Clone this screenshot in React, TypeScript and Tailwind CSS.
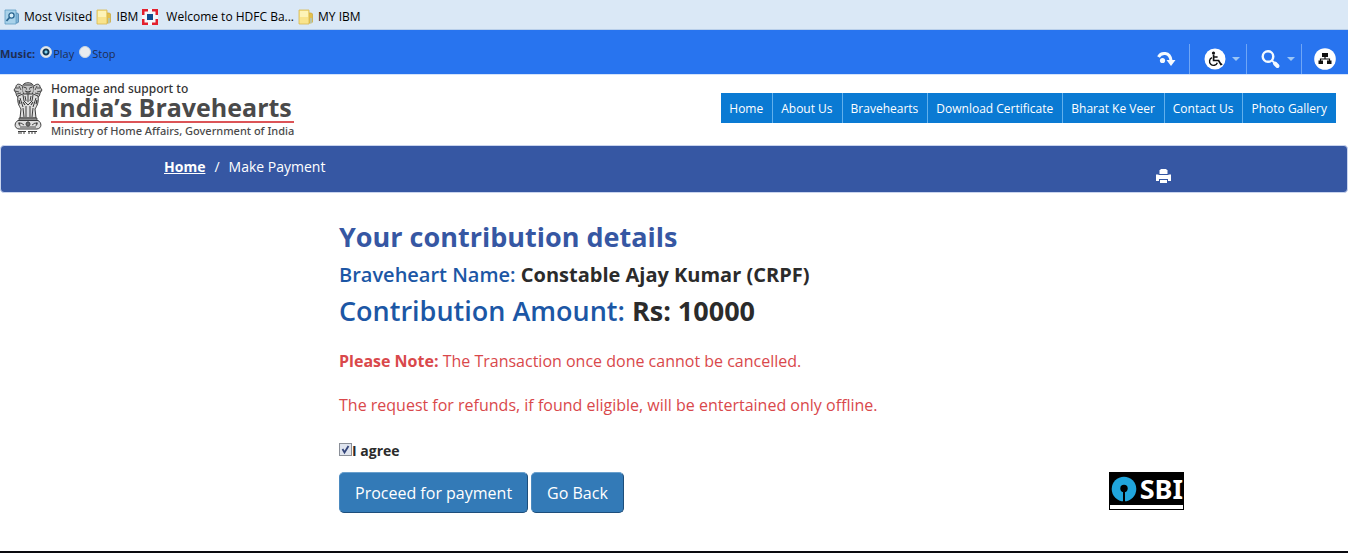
import { useState } from "react";

const FolderIcon = () => (
  <svg width="16" height="16" viewBox="0 0 16 16" aria-hidden="true">
    <path d="M9 4h4.500l1 1v8l-1 1H9z" fill="#e3c04e" stroke="#c9a63c" strokeWidth=".7" />
    <path d="M1 1h10v14H1z" fill="#f9e48d" stroke="#d8b850" strokeWidth=".8" />
    <path d="M2 2h8v6H2z" fill="#fdf3b8" />
    <path d="M12 9h2v5h-2z" fill="#b9c6a8" />
  </svg>
);

const MostVisitedIcon = () => (
  <svg width="16" height="16" viewBox="0 0 16 16" aria-hidden="true">
    <path d="M10 4h3.500l1 1v8l-1 1H10z" fill="#7fb3d6" stroke="#4c83ab" strokeWidth=".8" />
    <path d="M1 1h11v14H1z" fill="#a9d2ea" stroke="#5f9cc4" strokeWidth=".8" />
    <circle cx="7.500" cy="6.500" r="2.600" fill="#d8effa" stroke="#2a648f" strokeWidth="1.300" />
    <path d="M5.500 8.500 2.500 12" stroke="#2a648f" strokeWidth="1.700" />
  </svg>
);

const BankIcon = () => (
  <svg width="16" height="16" viewBox="0 0 16 16" aria-hidden="true">
    <path d="M0 0h16v16H0z" fill="#e3202e" />
    <path d="M2.500 2.500h11v11h-11zM6 0h4v16H6zM0 6h16v4H0z" fill="#f4f8fc" />
    <path d="M5 5h6v6H5z" fill="#0f4d90" />
  </svg>
);

const Emblem = () => (
  <svg width="30" height="54" viewBox="0 0 30 54" fill="none" stroke="#3c3c3c" aria-hidden="true">
    <path d="M10 3c1-3 9-3 10 0l1 5-2 5h-8l-2-5z" fill="#c4c4c4" strokeWidth="1" />
    <path d="M11 3h8M10.500 5l3 1m3 0 3-1M13 7h1m2 0h1M12 9l3 1 3-1M13 11h4" strokeWidth="1" />
    <path d="M9 4C6 1 3 2 3 5L1 8l2 3c0 3 2 5 4 5l3-2M21 4c3-3 6-2 6 1l2 3-2 3c0 3-2 5-4 5l-3-2" fill="#cacaca" strokeWidth="1" />
    <path d="M3 6h3M2 9l4 1M4 12l4-1M27 6h-3M28 9l-4 1M26 12l-4-1M6 4l2 4M24 4l-2 4" strokeWidth=".9" />
    <path d="M5 14c-1 6 1 10 3 13l-1 9h16l-1-9c2-3 4-7 3-13l-5-2H10z" fill="#dedede" strokeWidth="1" />
    <path d="M10 13l1 6 4 4 4-4 1-6M7 16l3 9M23 16l-3 9M12 14l1 5m5-5-1 5M15 12v8" strokeWidth="1" />
    <path d="M10 26l1 9M13 24v11M20 26l-1 9M17 24v11" strokeWidth="1" />
    <path d="M6 18l1 4M24 18l-1 4M10 20l2 3m8-3-2 3" strokeWidth="1.200" />
    <path d="M6 36h18v2.500H6z" fill="#8a8a8a" strokeWidth=".8" />
    <path d="M5 38.500c-4 2-4 8 1 8.500h18c5-.5 5-6.500 1-8.500z" fill="#dedede" strokeWidth="1" />
    <circle cx="15" cy="42" r="2" strokeWidth="1" />
    <path d="M15 39.500v5m-2-2.500h4M5 42l3-1 3 2m8 0 3-2 3 1M7 45h16M6 40l1 4M24 40l-1 4" strokeWidth=".9" />
    <path d="M5 49.500h8M15 49.500h9M6 50v2m2-2v2m3-2v2m5-2v2m3-2v2m3-2v2" strokeWidth="1" />
  </svg>
);

const SkipIcon = () => (
  <svg width="20" height="16" viewBox="0 0 20 16" aria-hidden="true">
    <path d="M1.500 6C4 1 13 .5 14 9.500" fill="none" stroke="#f4faff" strokeWidth="3" />
    <path d="M9.500 9h9L14 15z" fill="#f4faff" />
    <circle cx="5.500" cy="9.500" r="2.600" fill="#f4faff" />
  </svg>
);

const AccessIcon = () => (
  <svg width="22" height="22" viewBox="0 0 22 22" aria-hidden="true">
    <circle cx="11" cy="11" r="10.500" fill="#fff" />
    <circle cx="9.500" cy="5" r="1.600" fill="#111" />
    <path d="M9.600 6.500v6h5l2.300 4 1.300-.6M9.600 9h4" fill="none" stroke="#111" strokeWidth="1.700" />
    <path d="M8 9.700a4 4 0 1 0 5.300 5" fill="none" stroke="#111" strokeWidth="1.400" />
  </svg>
);

const SearchIcon = () => (
  <svg width="20" height="20" viewBox="0 0 20 20" fill="none" stroke="#f4faff" aria-hidden="true">
    <circle cx="7" cy="7.500" r="5.300" strokeWidth="2.400" />
    <path d="m11 11.500 2 2" strokeWidth="1.800" />
    <path d="m14 14.500 2.500 2.500" strokeWidth="4" strokeLinecap="round" />
  </svg>
);

const SitemapIcon = () => (
  <svg width="22" height="22" viewBox="0 0 22 22" aria-hidden="true">
    <circle cx="11" cy="11" r="10.800" fill="#fff" />
    <path d="M8 5h6v4H8zM4.500 12.500H9V16H4.500zM13 12.500h4.500V16H13z" fill="#111" />
    <path d="M11 8v3M6.500 13.500V11h9v2.500" fill="none" stroke="#111" strokeWidth="1.200" />
  </svg>
);

const Caret = () => (
  <svg width="8" height="4" viewBox="0 0 8 4" aria-hidden="true">
    <path d="M0 0h8L4 4z" fill="#9cc6f5" />
  </svg>
);

const PrintIcon = () => (
  <svg width="15" height="14" viewBox="0 0 15 14" fill="#fff" aria-hidden="true">
    <path d="M3.500 1.500 5 0h5l1.500 1.500V5h-8z" />
    <path d="M0 5.500h2.500V6h10v-.5H15V12h-3v-2H3v2H0z" />
    <path d="M4 11h7v3H4z" />
  </svg>
);

const TickIcon = () => (
  <svg width="13" height="13" viewBox="0 0 13 13" className="pointer-events-none [grid-area:1/1]" aria-hidden="true">
    <path d="M3.500 6 5.500 9.500 9.500 3" fill="none" stroke="#34457a" strokeWidth="1.800" />
  </svg>
);

const SbiMark = () => (
  <svg width="26" height="26" viewBox="0 0 26 26" aria-hidden="true">
    <circle cx="13" cy="13" r="12.300" fill="#20a5dc" />
    <circle cx="13" cy="12.500" r="3.700" fill="#000" />
    <path d="M12 14h2v12h-2z" fill="#000" />
  </svg>
);

const bookmarks = [
  { label: "Most Visited", icon: <MostVisitedIcon />, gap: "gap-1" },
  { label: "IBM", icon: <FolderIcon />, gap: "gap-1" },
  { label: "Welcome to HDFC Ba...", icon: <BankIcon />, gap: "gap-2" },
  { label: "MY IBM", icon: <FolderIcon />, gap: "gap-1" },
];

const links = ["Home", "About Us", "Bravehearts", "Download Certificate", "Bharat Ke Veer", "Contact Us", "Photo Gallery"];

const button =
  "h-[41px] rounded-[5px] border border-t-[#6aa0cd] border-l-[#4b8ac0] border-r-[#1d4e7b] border-b-[#1d4e7b] bg-[#337ab7] px-[15px] text-base text-white";

export default function App() {
  const [music, setMusic] = useState("play");
  const [agree, setAgree] = useState(true);

  return (
    <div className="bg-white font-['Open_Sans',sans-serif] text-[#2b2b2b]">
      <nav aria-label="Bookmarks" className="flex h-[30px] items-center gap-1 border-b border-[#b9cfea] bg-[#dae8f6] pt-1 pl-1 text-xs text-black">
        {bookmarks.map((b) => (
          <a key={b.label} href="#" className={`flex items-center ${b.gap}`}>
            {b.icon}
            {b.label}
          </a>
        ))}
      </nav>

      <div className="flex h-11 justify-between bg-[#2874ef]">
        <div role="radiogroup" aria-labelledby="music-label" className="flex items-center gap-[5px] pt-1 text-[11px] text-[#1f2d52]">
          <span id="music-label" className="font-bold">Music:</span>
          {["Play", "Stop"].map((name) => (
            <label key={name} className="flex items-center gap-px">
              <input
                type="radio"
                name="music"
                checked={music === name.toLowerCase()}
                onChange={() => setMusic(name.toLowerCase())}
                className="mb-1 size-3 appearance-none rounded-full border border-[#c9d6e2] bg-[#e9ecef] checked:bg-[radial-gradient(circle,#7fd0ee_0_1px,#123a55_2px_3px,#e9ecef_4px)]"
              />
              {name}
            </label>
          ))}
        </div>
        <div className="flex items-end pr-3">
          <button aria-label="Skip to content" className="flex h-[30px] items-center pr-3">
            <SkipIcon />
          </button>
          <button aria-label="Accessibility" className="flex h-[30px] items-center gap-1.5 border-l border-[#6fa6f6] pr-1.5 pl-3.5">
            <AccessIcon />
            <Caret />
          </button>
          <button aria-label="Search" className="flex h-[30px] items-center gap-1.5 border-l border-[#6fa6f6] pr-1.5 pl-3.5">
            <SearchIcon />
            <Caret />
          </button>
          <button aria-label="Site map" className="flex h-[30px] items-center border-l border-[#6fa6f6] pl-3">
            <SitemapIcon />
          </button>
        </div>
      </div>

      <header className="flex h-[71px] items-start justify-between border-t border-[#d3e3fb] pr-3 pl-[13px]">
        <a href="#" className="flex gap-2 pt-[7px]">
          <Emblem />
          <span className="flex flex-col text-[#4a4a4a]">
            <span className="font-['Noto_Sans',sans-serif] text-xs leading-[14px] font-medium text-[#333]">Homage and support to</span>
            <span className="border-b-2 border-[#dc5457] pb-[3px] text-[25px] leading-[22px] font-bold">India’s Bravehearts</span>
            <span className="font-['Noto_Sans',sans-serif] text-[11px] leading-4 font-medium">Ministry of Home Affairs, Government of India</span>
          </span>
        </a>
        <nav aria-label="Main" className="mt-[18px] flex h-[30px] bg-[#0a7ad3] text-xs text-white">
          {links.map((l) => (
            <a key={l} href="#" className="flex items-center border-r border-[#62b0ec] pt-px pr-[9px] pl-2 last:border-r-0">
              {l}
            </a>
          ))}
        </nav>
      </header>

      <div className="h-12 rounded border border-[#c9d4ee] bg-[#3657a3] text-sm text-white">
        <div className="mx-auto flex max-w-[1020px] justify-between pr-[13px]">
          <nav aria-label="Breadcrumb" className="flex gap-[9px] pt-[11px]">
            <a href="#" className="font-bold underline">Home</a>
            <span>/</span>
            <span>Make Payment</span>
          </nav>
          <button aria-label="Print" className="mt-[23px]">
            <PrintIcon />
          </button>
        </div>
      </div>

      <main className="mx-auto max-w-[1020px] pt-6 pb-[38px] pl-[175px]">
        <h1 className="text-[27px] leading-10 font-bold text-[#3657a3]">Your contribution details</h1>
        <h2 className="text-xl leading-9 font-semibold text-[#1c57a5]">
          Braveheart Name: <strong className="font-bold text-[#2b2b2b]">Constable Ajay Kumar (CRPF)</strong>
        </h2>
        <h2 className="text-[27px] leading-9 font-semibold text-[#1c57a5]">
          Contribution Amount: <strong className="font-bold text-[#2b2b2b]">Rs: 10000</strong>
        </h2>
        <div className="mt-5 flex flex-col gap-5 text-base text-[#d9484b]">
          <p>
            <strong className="font-bold">Please Note:</strong> The Transaction once done cannot be cancelled.
          </p>
          <p>The request for refunds, if found eligible, will be entertained only offline.</p>
        </div>
        <label className="mt-6 flex items-center text-sm font-bold">
          <span className="mb-1 grid">
            <input
              type="checkbox"
              checked={agree}
              onChange={(e) => setAgree(e.target.checked)}
              className="size-[13px] appearance-none border border-[#8a8f98] bg-[#dfe4ee] [grid-area:1/1]"
            />
            {agree && <TickIcon />}
          </span>
          I agree
        </label>
        <div className="mt-[11px] flex items-start justify-between">
          <div className="flex gap-[3px]">
            <button className={button}>Proceed for payment</button>
            <button className={button}>Go Back</button>
          </div>
          <div className="border border-black bg-white pb-1">
            <div className="flex h-8 items-center gap-[3px] bg-black pl-px">
              <SbiMark />
              <span className="font-['Noto_Sans',sans-serif] text-[27px] leading-8 font-bold text-white">SBI</span>
            </div>
          </div>
        </div>
      </main>
      <footer className="border-t-2 border-[#0a0a0f]" />
    </div>
  );
}
